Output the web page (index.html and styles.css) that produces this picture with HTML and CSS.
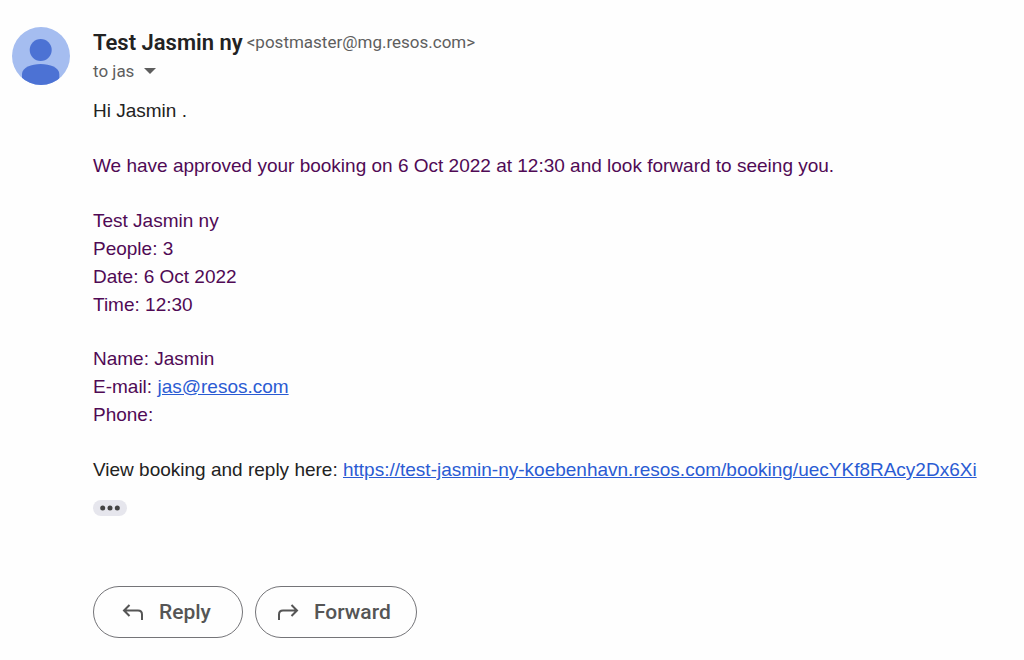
FILE: index.html
```html
<!DOCTYPE html>
<html lang="en">
<head>
    <meta charset="UTF-8">
    <meta name="viewport" content="width=device-width, initial-scale=1.0">
    <title>Booking approved</title>
    <link rel="stylesheet" href="styles.css">
</head>
<body>
    <main class="message">
        <svg class="avatar" viewBox="0 0 58 58" aria-hidden="true">
            <clipPath id="avatarClip"><circle cx="29" cy="29" r="29"/></clipPath>
            <g clip-path="url(#avatarClip)">
                <rect width="58" height="58" fill="#a5bdf0"/>
                <circle cx="28.700" cy="23" r="11" fill="#4c72d4"/>
                <path d="M10 60V47C10 40.500 19.500 37 28.700 37S47.300 40.500 47.300 47V60Z" fill="#4c72d4"/>
            </g>
        </svg>

        <div class="content">
            <header>
                <div class="sender">
                    <h1>Test Jasmin ny</h1>
                    <span class="address">&lt;postmaster@mg.resos.com&gt;</span>
                </div>
                <button type="button" class="recipient">
                    to jas
                    <svg width="12" height="6" viewBox="0 0 12 6" aria-hidden="true"><path d="M0 0h12L6 6z" fill="currentColor"/></svg>
                </button>
            </header>

            <div class="body">
                <p>Hi Jasmin .</p>
                <p class="quoted">We have approved your booking on 6 Oct 2022 at 12:30 and look forward to seeing you.</p>
                <p class="quoted booking">
                    Test Jasmin ny<br>
                    People: 3<br>
                    Date: 6 Oct 2022<br>
                    Time: 12:30
                </p>
                <p class="quoted">
                    Name: Jasmin<br>
                    E-mail: <a href="mailto:jas@resos.com">jas@resos.com</a><br>
                    Phone:
                </p>
                <p>View booking and reply here: <a href="https://test-jasmin-ny-koebenhavn.resos.com/booking/uecYKf8RAcy2Dx6Xi">https://test-jasmin-ny-koebenhavn.resos.com/booking/uecYKf8RAcy2Dx6Xi</a></p>
            </div>

            <button type="button" class="trimmed" aria-label="Show trimmed content">
                <svg width="20" height="6" viewBox="0 0 20 6" fill="currentColor" aria-hidden="true">
                    <circle cx="2.700" cy="3" r="2.500"/>
                    <circle cx="10" cy="3" r="2.500"/>
                    <circle cx="17.300" cy="3" r="2.500"/>
                </svg>
            </button>

            <div class="actions">
                <button type="button" class="action reply">
                    <svg width="22" height="18" viewBox="0 0 22 18" aria-hidden="true"><path d="M7.500 2L2 7.500L7.500 13M2 7.500H16Q20 7.500 20 11.500V17"/></svg>
                    Reply
                </button>
                <button type="button" class="action forward">
                    <svg width="22" height="18" viewBox="0 0 22 18" aria-hidden="true"><path d="M14.500 2L20 7.500L14.500 13M20 7.500H6Q2 7.500 2 11.500V17"/></svg>
                    Forward
                </button>
            </div>
        </div>
    </main>
</body>
</html>
```
FILE: styles.css
```css
:root {
    --bg-color: #fefefe;
    --text-color: #222;
    --muted-color: #5e5e5e;
    --quoted-color: #500a55;
    --link-color: #2a5bd3;
    --ui-font: Roboto, "Liberation Sans", sans-serif;
}

body {
    margin: 0;
    background-color: var(--bg-color);
    color: var(--text-color);
    font-family: "Liberation Sans", Arial, sans-serif;
    font-size: 19px;
}

button {
    border: none;
    padding: 0;
    background: none;
    font-family: var(--ui-font);
    cursor: pointer;
}

.message {
    display: flex;
    gap: 23px;
    padding: 27px 12px 20px;
}

.avatar {
    flex: none;
    width: 58px;
    height: 58px;
}

.content {
    flex: 1;
    min-width: 0;
}

.sender {
    display: flex;
    align-items: center;
    gap: 4px;
    font-family: var(--ui-font);
    line-height: 31px;
}

h1 {
    margin: 0;
    font-size: 22px;
    font-weight: 600;
}

.address {
    color: var(--muted-color);
    font-size: 17px;
}

.recipient {
    display: flex;
    align-items: center;
    gap: 10px;
    color: var(--muted-color);
    font-size: 17px;
    line-height: 26px;
}

.body {
    margin-top: 13px;
    line-height: 28px;
}

.body p {
    margin: 0 0 27px;
}

.body .booking {
    margin-bottom: 26px;
}

.body p:last-child {
    margin-bottom: 0;
}

.body a {
    color: var(--link-color);
}

.quoted {
    color: var(--quoted-color);
}

.trimmed {
    display: flex;
    align-items: center;
    justify-content: center;
    width: 34px;
    height: 16px;
    margin-top: 16px;
    border-radius: 8px;
    background-color: #e6e6ed;
    color: #444;
}

.actions {
    display: flex;
    gap: 12px;
    margin-top: 70px;
}

.action {
    display: flex;
    align-items: center;
    gap: 15px;
    height: 52px;
    border: 1px solid #747478;
    border-radius: 26px;
    color: #555;
    font-size: 21px;
    font-weight: 500;
}

.reply {
    padding: 0 31px 0 28px;
}

.forward {
    padding: 0 25px 0 21px;
}

.action path {
    fill: none;
    stroke: currentColor;
    stroke-width: 2;
}
```
